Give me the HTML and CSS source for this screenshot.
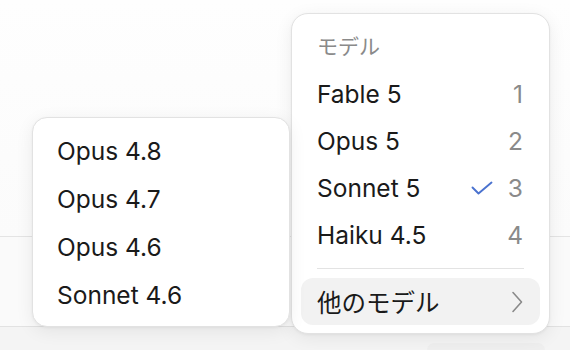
FILE: index.html
```html
<!DOCTYPE html>
<html lang="ja">
<head>
<meta charset="utf-8">
<link rel="stylesheet" href="styles.css">
</head>
<body>
<div class="page">
  <div class="band band-top"></div>
  <div class="band band-mid"></div>
  <div class="band band-foot"><div class="foot-btn"></div></div>

  <div class="menu main-menu">
    <div class="menu-head">モデル</div>
    <div class="item"><span class="label">Fable 5</span><span class="num">1</span></div>
    <div class="item"><span class="label">Opus 5</span><span class="num">2</span></div>
    <div class="item"><span class="label">Sonnet 5</span><span class="check"><svg width="22" height="14" viewBox="0 0 22 14"><path d="M1.5 6.5 L7.5 12.5 L20.5 1.5" fill="none" stroke="#4a72cf" stroke-width="1.9" stroke-linecap="round" stroke-linejoin="round"/></svg></span><span class="num">3</span></div>
    <div class="item"><span class="label">Haiku 4.5</span><span class="num">4</span></div>
    <div class="sep"></div>
    <div class="item item-active"><span class="label">他のモデル</span><span class="chev"><svg width="12" height="22" viewBox="0 0 12 22"><path d="M2 1.5 L10.5 11 L2 20.5" fill="none" stroke="#8a8a8a" stroke-width="1.6" stroke-linecap="round" stroke-linejoin="round"/></svg></span></div>
  </div>

  <div class="menu sub-menu">
    <div class="item"><span class="label">Opus 4.8</span></div>
    <div class="item"><span class="label">Opus 4.7</span></div>
    <div class="item"><span class="label">Opus 4.6</span></div>
    <div class="item"><span class="label">Sonnet 4.6</span></div>
  </div>
</div>
</body>
</html>
```
FILE: styles.css
```css
* { box-sizing: border-box; }
html, body { margin: 0; padding: 0; }
body {
  width: 570px;
  height: 350px;
  overflow: hidden;
  background: #f7f7f7;
  font-family: Inter, "Noto Sans CJK JP", sans-serif;
  color: #1a1a1a;
}
.page {
  position: relative;
  width: 570px;
  height: 350px;
  display: flex;
  flex-direction: column;
}
.band-top {
  height: 237px;
  background: linear-gradient(180deg, #fefefe 0%, #fbfbfb 100%);
  border-bottom: 1px solid #e4e4e4;
}
.band-mid {
  height: 90px;
  background: #fafafa;
  border-bottom: 1px solid #e2e2e2;
}
.band-foot {
  flex: 1;
  background: #f4f4f4;
  display: flex;
  justify-content: flex-end;
  align-items: flex-end;
  padding-right: 25px;
}
.foot-btn {
  width: 118px;
  height: 7px;
  background: #efefef;
  border-radius: 8px 8px 0 0;
}
.menu {
  position: absolute;
  background: #fff;
  border: 1px solid #e2e2e2;
  box-shadow: 0 4px 18px rgba(0,0,0,0.07), 0 1px 3px rgba(0,0,0,0.05);
}
.main-menu {
  left: 291px;
  top: 13px;
  width: 259px;
  height: 321px;
  border-radius: 17px;
  padding: 13px 9px 8px 9px;
}
.sub-menu {
  left: 32px;
  top: 117px;
  width: 258px;
  height: 210px;
  border-radius: 15px;
  padding: 9px 9px;
}
.menu-head {
  height: 36px;
  margin-bottom: 7px;
  padding-left: 16px;
  font-size: 21px;
  color: #8a8a8a;
  display: flex;
  align-items: center;
}
.item {
  height: 47px;
  display: flex;
  align-items: center;
  padding: 0 17px 0 16px;
  font-size: 24.5px;
  border-radius: 12px;
}
.sub-menu .item { padding-left: 15px; height: 48px; }
.label { flex: 1; }
.num {
  color: #8a8a8a;
  width: 20px;
  text-align: right;
}
.check {
  width: 22px;
  display: flex;
  align-items: center;
  margin-right: 10px;
}
.sep {
  height: 1px;
  background: #e3e3e3;
  margin: 10px 16px 9px;
}
.item-active {
  background: #f2f2f2;
}
.chev { display: flex; align-items: center; }
```
